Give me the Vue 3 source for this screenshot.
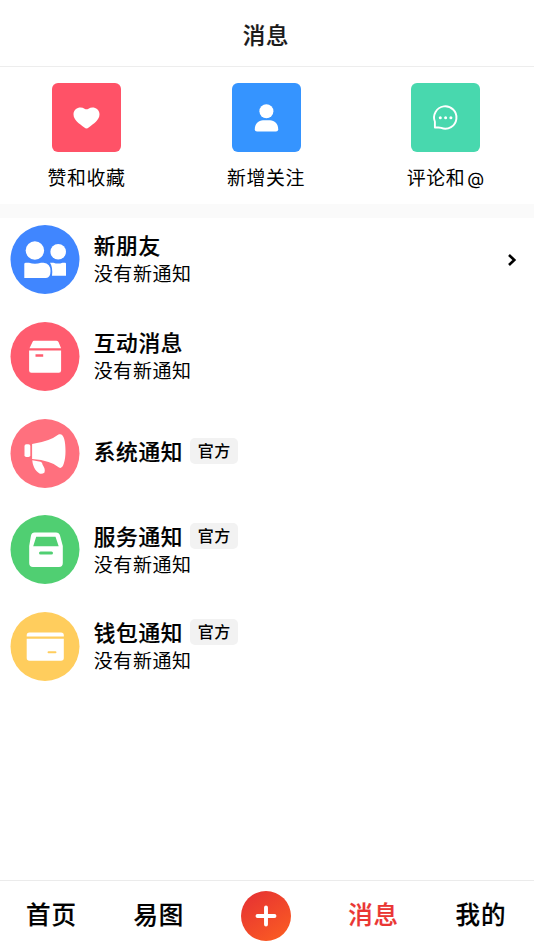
<script setup>
const shortcuts = [
  { id: 'like', label: '赞和收藏', color: '#ff5267' },
  { id: 'follow', label: '新增关注', color: '#3594ff' },
  { id: 'comment', label: '评论和', at: true, color: '#48d8ae' },
]
const notices = [
  { id: 'friends', title: '新朋友', sub: '没有新通知', color: '#4086ff', arrow: true },
  { id: 'interact', title: '互动消息', sub: '没有新通知', color: '#ff5c6f' },
  { id: 'system', title: '系统通知', official: true, color: '#ff707e' },
  { id: 'service', title: '服务通知', sub: '没有新通知', official: true, color: '#50cf72' },
  { id: 'wallet', title: '钱包通知', sub: '没有新通知', official: true, color: '#ffcd5d' },
]
</script>

<template>
  <div class="page">
    <header class="header"><h1>消息</h1></header>

    <section class="shortcuts">
      <div v-for="s in shortcuts" :key="s.id" class="shortcut">
        <div class="tile" :style="{ background: s.color }">
          <svg viewBox="0 0 69 69" fill="#fff">
            <path v-if="s.id === 'like'" d="M34.500 45.200Q33.500 45.200 32 44C27.500 40.500 21.500 37 21.500 31C21.500 25 28.500 22.500 32.500 25.500Q34.500 26.500 36.500 25.500C40.500 22.500 47.500 25 47.500 31C47.500 37 41.500 40.500 37 44Q35.500 45.200 34.500 45.200Z" />
            <g v-else-if="s.id === 'follow'">
              <circle cx="34.400" cy="28" r="7" />
              <path d="M22.800 46C22.800 40.500 26.500 37 31 37H38C42.500 37 46.200 40.500 46.200 46Q46.200 48.200 44 48.200H25Q22.800 48.200 22.800 46Z" />
            </g>
            <g v-else>
              <path d="M23.900 44.300V38.500A11.200 11.200 0 1 1 30.200 44.700Q29 44.300 27.500 44.300Z" fill="none" stroke="#fff" stroke-width="1.900" stroke-linejoin="round" />
              <circle cx="29.300" cy="34.600" r="1.500" /><circle cx="34.600" cy="34.600" r="1.500" /><circle cx="39.900" cy="34.600" r="1.500" />
            </g>
          </svg>
        </div>
        <span class="label">{{ s.label }}<span v-if="s.at" class="at">@</span></span>
      </div>
    </section>

    <main class="list">
      <div v-for="n in notices" :key="n.id" class="row">
        <div class="avatar">
          <svg viewBox="-0.5 0 70 69" fill="#fff">
            <circle cx="34.500" cy="34.500" r="34.500" :fill="n.color" />
            <g v-if="n.id === 'friends'">
              <circle cx="24.400" cy="25.500" r="9.200" />
              <circle cx="47.700" cy="26.700" r="7.800" />
              <path d="M13.800 38.800Q14 37.700 15.500 37.700H18.500Q24.500 40 30.500 37.700H33Q40 38.500 40 46Q40 53 35.500 53H13.800Z" />
              <path d="M39.500 37.700H43Q47.500 39.500 52 37.700H54.500Q55.500 37.700 55.500 38.700V50.700H41.500Q42.500 42 39.500 37.700Z" />
            </g>
            <g v-else-if="n.id === 'interact'">
              <path d="M23.500 18.800H45.800Q47.200 18.800 48 20L50.600 26.300H19L22 20Q22.500 18.800 23.500 18.800Z" />
              <path fill-rule="evenodd" d="M18.600 28.600H50.600V48.500Q50.600 50.800 48.300 50.800H20.900Q18.600 50.800 18.600 48.500ZM25 32.300V34.700H32.700V32.300Z" />
            </g>
            <g v-else-if="n.id === 'system'">
              <rect x="14" y="25.300" width="5.800" height="12.800" rx="1.800" />
              <path d="M21.600 25Q39 22.500 48 15.500C53 13.500 55 21 55 32C55 43 52 51 48.500 48.500Q41 41.500 21.600 40Z" />
              <path d="M21.800 41.300L30 42.800Q32 43.500 32 45.500C33.500 48 35 50.500 34 53.500Q32 55.200 29 54.500C24.500 52 22 46 21.800 41.300Z" />
            </g>
            <g v-else-if="n.id === 'service'">
              <path fill-rule="evenodd" d="M24 17.500H45.500Q48.700 17.500 49.500 20.500L52.300 31V48Q52.300 52 48.500 52H22.500Q18.700 52 18.700 48V31L20.500 20.500Q21.200 17.500 24 17.500ZM25.700 21.700L22.700 31.300H48.200L45 21.700ZM30 36.600A1.500 1.500 0 0 0 30 39.600H41A1.500 1.500 0 0 0 41 36.600Z" />
            </g>
            <g v-else>
              <path d="M19 20.600H50.500Q53.300 20.600 53.300 23.400V24.600H16.200V23.400Q16.200 20.600 19 20.600Z" />
              <path fill-rule="evenodd" d="M16.200 26.800H53.300V46Q53.300 48.800 50.500 48.800H19Q16.200 48.800 16.200 46ZM38 39.300A.9.9 0 0 0 38 41.200H45A.9.9 0 0 0 45 39.300Z" />
            </g>
          </svg>
        </div>
        <div class="info" :class="{ single: !n.sub }">
          <div class="title-line">
            <span class="title">{{ n.title }}</span>
            <span v-if="n.official" class="badge">官方</span>
          </div>
          <div v-if="n.sub" class="sub">{{ n.sub }}</div>
        </div>
        <svg v-if="n.arrow" class="arrow" viewBox="0 0 10 14"><path d="M2 2L7.300 7L2 12" fill="none" stroke="#000" stroke-width="2.600" /></svg>
      </div>
    </main>

    <nav class="tabs">
      <span class="tab">首页</span>
      <span class="tab">易图</span>
      <span class="add">
        <svg viewBox="0 0 50 50"><path d="M25 16.500V33.500M16.500 25H33.500" stroke="#fff" stroke-width="3.900" stroke-linecap="round" /></svg>
      </span>
      <span class="tab active">消息</span>
      <span class="tab">我的</span>
    </nav>
  </div>
</template>

<style>
body {
  background: #fff;
}
</style>

<style scoped>
.page {
  box-sizing: border-box;
  height: 950px;
  display: flex;
  flex-direction: column;
  overflow: hidden;
  color: #000;
  font-family: "Noto Sans CJK SC", sans-serif;
}
svg {
  display: block;
  width: 100%;
  height: 100%;
}
.header {
  box-sizing: border-box;
  height: 67px;
  padding: 2px 2px 0 0;
  border-bottom: 1px solid #ededed;
  display: flex;
  align-items: center;
  justify-content: center;
}
h1 {
  margin: 0;
  font-size: 22.500px;
  line-height: 32px;
  font-weight: 500;
  letter-spacing: 0.800px;
  color: #1a1a1a;
  -webkit-text-stroke: 0.200px;
}
.shortcuts {
  box-sizing: border-box;
  height: 151px;
  padding: 15.500px 0 0 41.500px;
  border-bottom: 14px solid #fafafa;
  display: flex;
  gap: 89.500px;
}
.shortcut {
  width: 90px;
  display: flex;
  flex-direction: column;
  align-items: center;
}
.tile {
  width: 69px;
  height: 69.500px;
  border-radius: 6px;
}
.label {
  margin-top: 10.500px;
  font-size: 18.900px;
  line-height: 28px;
  letter-spacing: 0.600px;
  white-space: nowrap;
}
.at {
  margin-left: 2px;
  font-family: Inter, sans-serif;
  font-size: 17.500px;
  line-height: 1;
  letter-spacing: 0;
}
.list {
  flex: 1;
  padding: 7px 17px 0 10px;
}
.row {
  display: flex;
  align-items: center;
  height: 69px;
  margin-bottom: 27.800px;
}
.avatar {
  width: 70px;
  height: 69px;
  flex: none;
}
.info {
  flex: 1;
  margin-left: 13.700px;
  padding-bottom: 1.500px;
}
.single {
  padding-bottom: 4px;
}
.title-line {
  display: flex;
  align-items: center;
  height: 28px;
}
.title {
  font-size: 21.700px;
  line-height: 28px;
  font-weight: 500;
  letter-spacing: 0.700px;
  -webkit-text-stroke: 0.200px;
}
.badge {
  height: 26px;
  margin-left: 7px;
  padding: 0 7.500px;
  border-radius: 5px;
  background: #f2f2f2;
  font-size: 16px;
  line-height: 25px;
  font-weight: 500;
  letter-spacing: 0.600px;
}
.sub {
  font-size: 19px;
  line-height: 27px;
  letter-spacing: 0.600px;
}
.arrow {
  width: 10px;
  height: 14px;
}
.tabs {
  box-sizing: border-box;
  height: 70px;
  border-top: 1px solid #ebebeb;
  padding: 0 27.500px 0 26px;
  display: flex;
  align-items: center;
  justify-content: space-between;
}
.tab {
  width: 51px;
  padding-bottom: 4px;
  font-size: 24.500px;
  line-height: 36px;
  font-weight: 500;
  letter-spacing: 0.900px;
  white-space: nowrap;
  -webkit-text-stroke: 0.200px;
}
.active {
  color: #ea3633;
}
.add {
  width: 50px;
  height: 50px;
  margin: 1px 1px 0 0;
  border-radius: 50%;
  background: linear-gradient(145deg, #e83631 15%, #fa5b23 90%);
}
</style>
